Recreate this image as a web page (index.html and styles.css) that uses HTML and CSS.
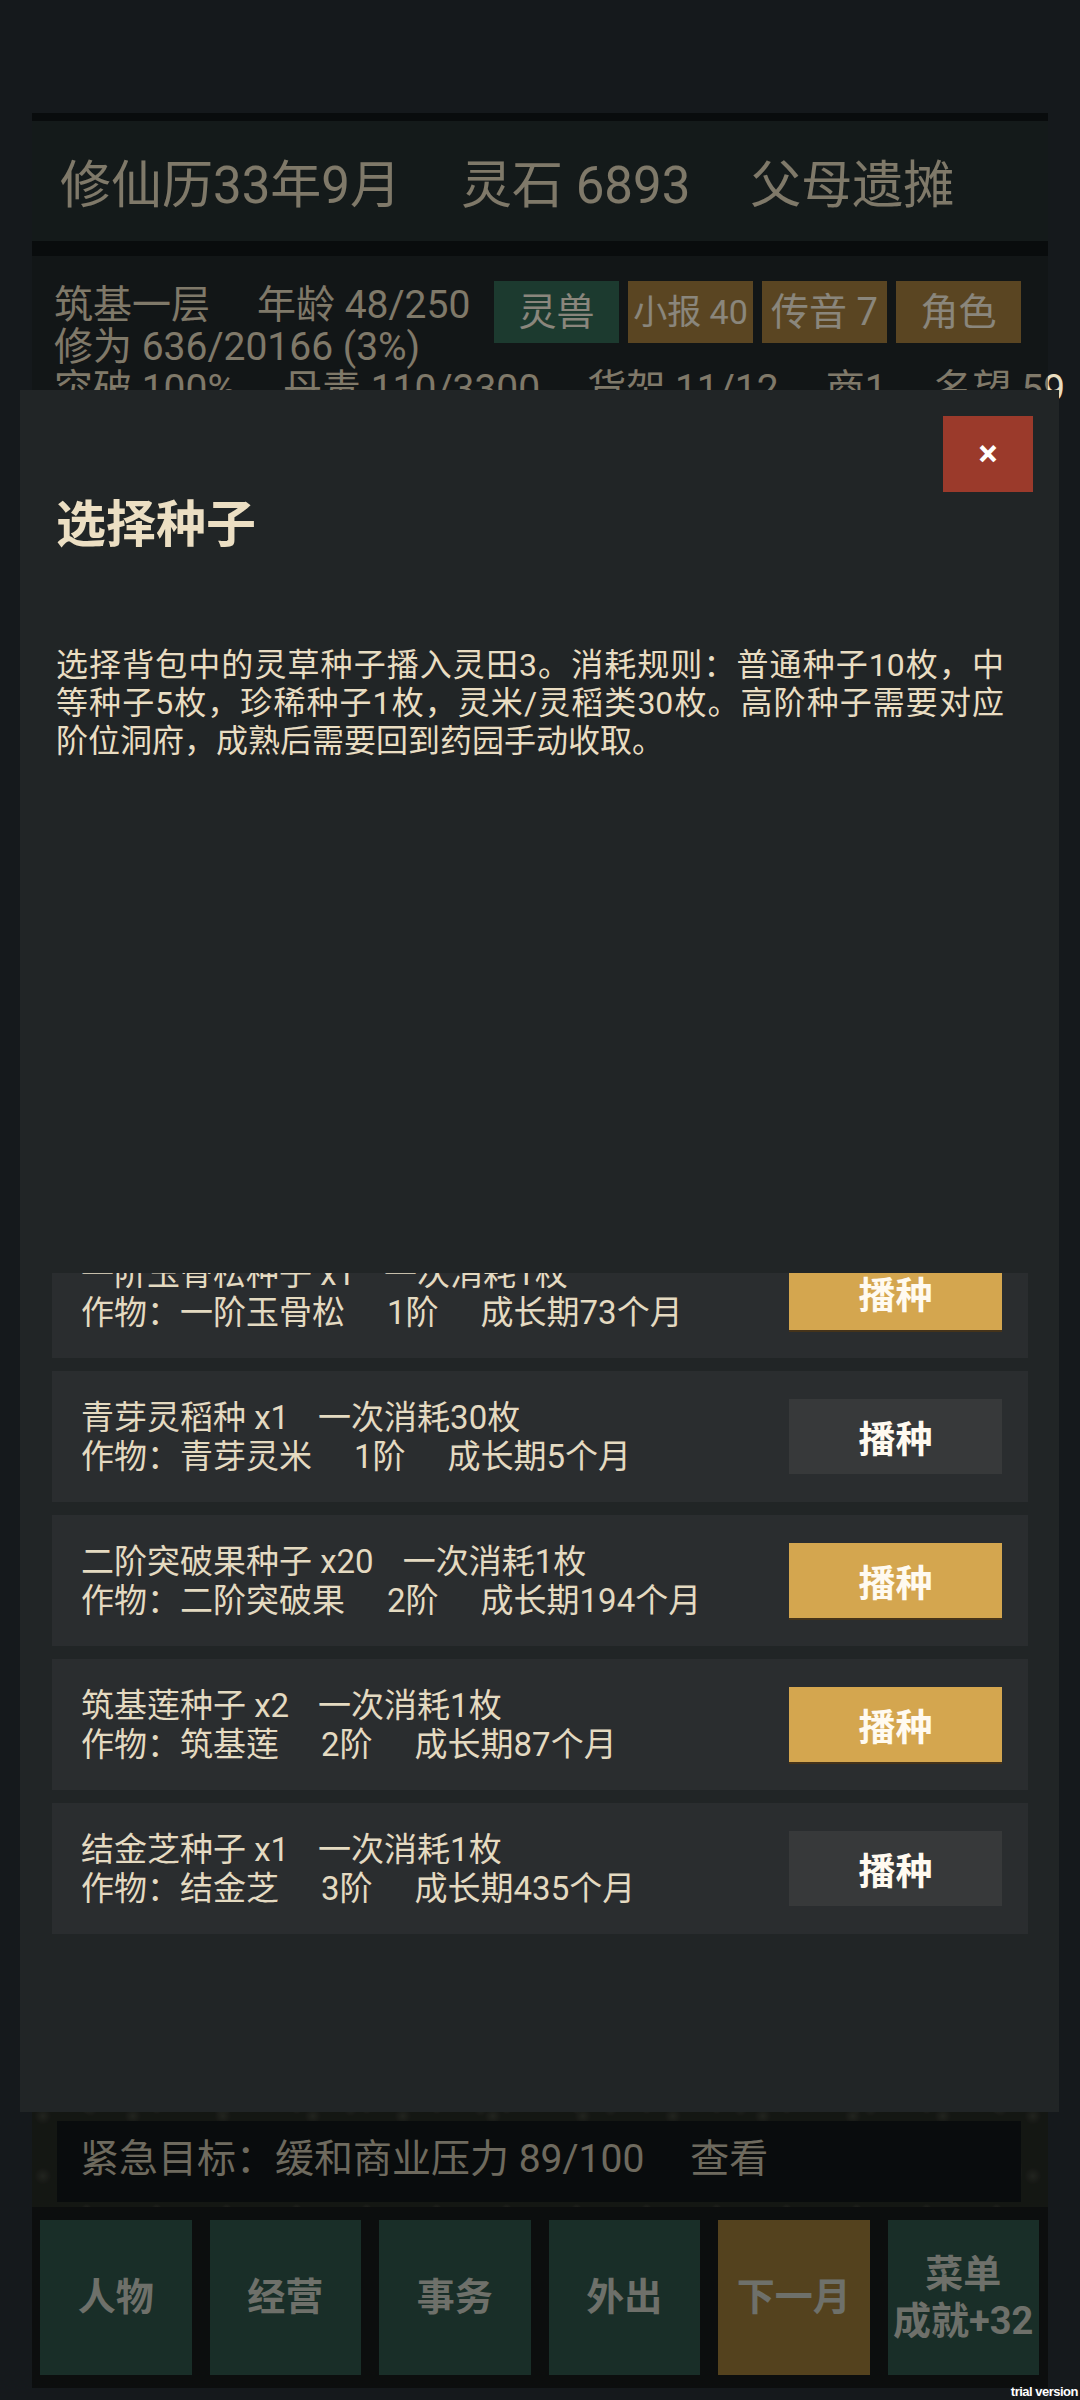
FILE: index.html
```html
<!DOCTYPE html>
<html lang="zh-CN">
<head>
    <meta charset="UTF-8">
    <meta name="viewport" content="width=device-width, initial-scale=1.0">
    <title>修仙 - 选择种子</title>
    <link rel="stylesheet" href="styles.css">
</head>
<body>
    <div class="app">
        <div class="top-bar">
            <span>修仙历33年9月</span>
            <span>灵石 6893</span>
            <span>父母遗摊</span>
        </div>

        <div class="stats">
            <div class="stats-row">
                <div class="stats-text">
                    <div><span>筑基一层</span><span class="sep">年龄 48/250</span></div>
                    <div>修为 636/20166 (3%)</div>
                </div>
                <div class="tags">
                    <span class="tag tag-green">灵兽</span>
                    <span class="tag tag-gold tag-small">小报 40</span>
                    <span class="tag tag-gold">传音 7</span>
                    <span class="tag tag-gold">角色</span>
                </div>
            </div>
            <div class="stats-line">
                <span>突破 100%</span><span class="sep">丹毒 110/3300</span><span class="sep">货架 11/12</span><span class="sep">商1</span><span class="sep">名望 59</span>
            </div>
        </div>

        <div class="scene">
            <div class="goal">
                <span>紧急目标：缓和商业压力 89/100</span>
                <span class="goal-link">查看</span>
            </div>
        </div>

        <div class="nav">
            <div class="nav-btn">人物</div>
            <div class="nav-btn">经营</div>
            <div class="nav-btn">事务</div>
            <div class="nav-btn">外出</div>
            <div class="nav-btn nav-gold">下一月</div>
            <div class="nav-btn">菜单<br>成就+32</div>
        </div>
    </div>

    <div class="modal">
        <button class="close-btn">×</button>
        <h2 class="modal-title">选择种子</h2>
        <p class="modal-desc">选择背包中的灵草种子播入灵田3。消耗规则：普通种子10枚，中等种子5枚，珍稀种子1枚，灵米/灵稻类30枚。高阶种子需要对应<span class="nobr">阶位洞府</span>，成熟后需要回到药园手动收取。</p>

        <div class="seed-scroll">
            <div class="seed-list">
                <div class="seed">
                    <div class="seed-info">
                        <div>一阶玉骨松种子 x1<span class="gap-s">一次消耗1枚</span></div>
                        <div>作物：一阶玉骨松<span class="gap">1阶</span><span class="gap">成长期73个月</span></div>
                    </div>
                    <button class="sow sow-gold">播种</button>
                </div>
                <div class="seed">
                    <div class="seed-info">
                        <div>青芽灵稻种 x1<span class="gap-s">一次消耗30枚</span></div>
                        <div>作物：青芽灵米<span class="gap">1阶</span><span class="gap">成长期5个月</span></div>
                    </div>
                    <button class="sow">播种</button>
                </div>
                <div class="seed">
                    <div class="seed-info">
                        <div>二阶突破果种子 x20<span class="gap-s">一次消耗1枚</span></div>
                        <div>作物：二阶突破果<span class="gap">2阶</span><span class="gap">成长期194个月</span></div>
                    </div>
                    <button class="sow sow-gold">播种</button>
                </div>
                <div class="seed">
                    <div class="seed-info">
                        <div>筑基莲种子 x2<span class="gap-s">一次消耗1枚</span></div>
                        <div>作物：筑基莲<span class="gap">2阶</span><span class="gap">成长期87个月</span></div>
                    </div>
                    <button class="sow sow-gold">播种</button>
                </div>
                <div class="seed">
                    <div class="seed-info">
                        <div>结金芝种子 x1<span class="gap-s">一次消耗1枚</span></div>
                        <div>作物：结金芝<span class="gap">3阶</span><span class="gap">成长期435个月</span></div>
                    </div>
                    <button class="sow">播种</button>
                </div>
            </div>
        </div>
    </div>

    <div class="watermark">trial version</div>
</body>
</html>
```

FILE: styles.css
```css
body {
    margin: 0;
    background-color: #15191c;
    font-family: Roboto, "Noto Sans CJK SC", sans-serif;
    color: #e8dcc0;
    height: 2400px;
    position: relative;
    overflow: hidden;
}

/* game screen behind the dialog */
.app {
    position: relative;
    margin: 113px 32px 0;
    height: 2275px;
    background-color: #121618;
    padding-top: 8px;
    box-sizing: border-box;
    display: flex;
    flex-direction: column;
}

.app::after {
    content: "";
    position: absolute;
    inset: 0;
    background: rgba(0, 0, 0, 0.45);
}

.top-bar {
    height: 120px;
    background-color: #263131;
    display: flex;
    align-items: center;
    gap: 60px;
    padding-left: 28px;
    font-size: 51px;
}

.stats {
    margin-top: 15px;
    background-color: #21282a;
    padding: 28px 27px 0 22px;
    height: 860px;
    font-size: 39px;
    line-height: 42px;
}

.stats-row {
    display: flex;
    justify-content: space-between;
}

.sep {
    margin-left: 47px;
}

.tags {
    display: flex;
    gap: 9px;
    margin-top: -3px;
}

.tag {
    width: 125px;
    height: 62px;
    display: flex;
    align-items: center;
    justify-content: center;
    font-size: 38px;
    color: #fbf5e2;
}

.tag-small {
    font-size: 34px;
}

.tag-green {
    background-color: #336a57;
}

.tag-gold {
    background-color: #a47e3e;
}

.stats-line {
    white-space: nowrap;
}

.scene {
    flex: 1;
    display: flex;
    flex-direction: column;
    justify-content: flex-end;
    padding: 0 27px 5px 25px;
    background:
        radial-gradient(circle at 12% 20%, #3e4239 0, transparent 9%),
        radial-gradient(circle at 45% 80%, #393d35 0, transparent 7%),
        radial-gradient(circle at 78% 30%, #42463c 0, transparent 8%),
        radial-gradient(circle at 92% 85%, #363a31 0, transparent 10%),
        #262a24;
    background-size: 90px 60px, 130px 70px, 70px 50px, 110px 80px, auto;
}

.goal {
    height: 81px;
    background-color: #121618;
    display: flex;
    align-items: center;
    padding: 0 0 14px 23px;
    box-sizing: border-box;
    font-size: 39px;
    color: #c9c2ac;
}

.goal-link {
    margin-left: 46px;
}

.nav {
    background-color: #161b1b;
    padding: 13px 9px 13px 8px;
    display: flex;
    gap: 18px;
}

.nav-btn {
    flex: 1;
    height: 155px;
    background-color: #2f5449;
    color: #c8cdc2;
    font-size: 38px;
    font-weight: bold;
    line-height: 47px;
    display: flex;
    align-items: center;
    justify-content: center;
    text-align: center;
}

.nav-gold {
    background-color: #997838;
}

/* seed dialog */
.modal {
    position: absolute;
    left: 20px;
    top: 390px;
    width: 1039px;
    height: 1722px;
    box-sizing: border-box;
    padding: 105px 31px 36px 32px;
    background-color: #212526;
    z-index: 2;
}

.close-btn {
    position: absolute;
    top: 26px;
    right: 26px;
    width: 90px;
    height: 76px;
    border: none;
    background-color: #9b3a2b;
    color: #fff;
    font-family: Roboto, sans-serif;
    font-size: 36px;
    font-weight: bold;
    cursor: pointer;
}

.modal-title {
    margin: 0 4px;
    font-size: 50px;
    line-height: 60px;
    color: #ecdfc3;
    font-weight: bold;
}

.modal-desc {
    margin: 91px 0 0 4px;
    width: 948px;
    font-size: 32px;
    line-height: 38px;
    text-align: justify;
    color: #e9ddc2;
}

.nobr {
    white-space: nowrap;
}

.seed-scroll {
    margin-top: 513px;
    height: 803px;
    overflow: hidden;
}

.seed-list {
    margin-top: -46px;
    display: flex;
    flex-direction: column;
    gap: 13px;
}

.seed {
    height: 131px;
    background-color: #2a2d2f;
    display: flex;
    align-items: center;
    padding: 0 26px 0 29px;
}

.seed-info {
    flex: 1;
    font-size: 33px;
    line-height: 39px;
    color: #e4dac1;
    white-space: nowrap;
}

.gap-s {
    margin-left: 29px;
}

.gap {
    margin-left: 42px;
}

.sow {
    width: 213px;
    height: 75px;
    border: none;
    background-color: #37393a;
    color: #fffaf0;
    font-family: Roboto, "Noto Sans CJK SC", sans-serif;
    font-size: 37px;
    font-weight: bold;
    cursor: pointer;
}

.sow-gold {
    background-color: #d4a64f;
    box-shadow: 0 2px 0 #45331a;
}

.watermark {
    position: absolute;
    right: 2px;
    bottom: 1px;
    font-family: "Liberation Sans", sans-serif;
    font-size: 13px;
    font-weight: bold;
    letter-spacing: -0.5px;
    color: #fff;
}
```
